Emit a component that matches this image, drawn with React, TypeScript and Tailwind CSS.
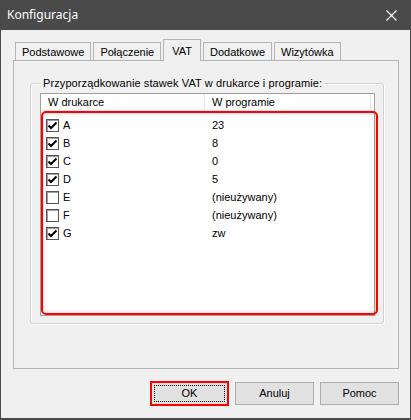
import React from "react";

const rows = [
  { code: "A", value: "23", checked: true },
  { code: "B", value: "8", checked: true },
  { code: "C", value: "0", checked: true },
  { code: "D", value: "5", checked: true },
  { code: "E", value: "(nieużywany)", checked: false },
  { code: "F", value: "(nieużywany)", checked: false },
  { code: "G", value: "zw", checked: true },
];

const tabs = ["Podstawowe", "Połączenie", "VAT", "Dodatkowe", "Wizytówka"];

function CheckBox({ checked }: { checked: boolean }) {
  return (
    <div className="h-[13px] w-[13px] border border-[#555] shadow-[inset_1px_1px_0_#a0a0a0] bg-white flex items-center justify-center">
      {checked && (
        <svg width="11" height="11" viewBox="0 0 11 11">
          <path d="M1.5 5.5 L4 8 L9.5 2.5" fill="none" stroke="#000" strokeWidth="2" />
        </svg>
      )}
    </div>
  );
}

function Tab({ label, active }: { label: string; active: boolean }) {
  if (active) {
    return (
      <div className="relative z-10 -mb-[1px] h-[22px] px-[8px] pt-[3px] bg-[#f0f0f0] border border-b-0 border-[#b4b4b4] text-[11px]">
        {label}
      </div>
    );
  }
  return (
    <div className="h-[18px] px-[6px] pt-[1px] bg-[#f0f0f0] border border-b-0 border-[#b4b4b4] text-[11px]">
      {label}
    </div>
  );
}

export default function App() {
  return (
    <div className="w-[411px] h-[420px] bg-[#4a4a4a] flex flex-col font-['Liberation_Sans',Arial,sans-serif] text-[11px] text-black">
      {/* Title bar */}
      <div className="h-[30px] flex items-center justify-between pl-[7px] pr-[14px] text-white">
        <span className="font-['Noto_Sans',sans-serif] text-[12px]">Konfiguracja</span>
        <svg width="11" height="11" viewBox="0 0 11 11">
          <path d="M0.5 0.5 L10.5 10.5 M10.5 0.5 L0.5 10.5" stroke="#fff" strokeWidth="1.2" />
        </svg>
      </div>

      {/* Body */}
      <div className="flex-1 mx-[1px] mb-[2px] bg-[#f0f0f0] flex flex-col pt-[9px]">
        {/* Tabs */}
        <div className="ml-[14px] flex items-end gap-[2px] h-[21px]">
          {tabs.map((t) => (
            <Tab key={t} label={t} active={t === "VAT"} />
          ))}
        </div>

        {/* Tab panel */}
        <div className="ml-[12px] w-[386px] h-[309px] border border-[#b4b4b4] bg-[#f0f0f0] pt-[22px] pl-[16px]">
          {/* Group box */}
          <div className="relative w-[354px] h-[241px] border border-[#d0d0d0] rounded-[3px] shadow-[inset_1px_1px_0_#fff,1px_1px_0_#fff] pt-[9px] pl-[9px]">
            <span className="absolute -top-[8px] left-[10px] bg-[#f0f0f0] px-[2px] leading-[14px] tracking-[0.1px]">
              Przyporządkowanie stawek VAT w drukarce i programie:
            </span>

            {/* List view */}
            <div className="relative w-[335px] h-[223px] border border-[#a0a0a0] bg-white">
              <div className="flex h-[17px] border-b border-[#e5e5e5]">
                <div className="w-[164px] pl-[7px] leading-[16px] border-r border-[#e5e5e5]">W drukarce</div>
                <div className="w-[166px] pl-[7px] leading-[16px] border-r border-[#e5e5e5]">W programie</div>
              </div>
              <div className="pt-[5px]">
                {rows.map((r) => (
                  <div key={r.code} className="flex items-center h-[18px]">
                    <div className="w-[164px] flex items-center pl-[5px] gap-[4px]">
                      <CheckBox checked={r.checked} />
                      <span>{r.code}</span>
                    </div>
                    <div className="pl-[7px]">{r.value}</div>
                  </div>
                ))}
              </div>

              {/* red annotation */}
              <div className="absolute left-[0px] top-[17px] w-[337px] h-[204px] border-2 border-[#ff0000] rounded-[5px] shadow-[inset_0_0_5px_rgba(0,0,0,0.18)] pointer-events-none" />
            </div>
          </div>
        </div>

        {/* Buttons */}
        <div className="flex justify-end gap-[6px] pr-[11px] mt-[12px]">
          <button className="w-[79px] h-[25px] border-2 border-[#ff0000] bg-[#e1e1e1] flex items-center justify-center">
            <span className="w-[71px] h-[17px] border border-dotted border-black flex items-center justify-center">OK</span>
          </button>
          <button className="w-[79px] h-[23px] mt-[1px] border border-[#adadad] bg-[#e1e1e1]">Anuluj</button>
          <button className="w-[79px] h-[23px] mt-[1px] border border-[#adadad] bg-[#e1e1e1]">Pomoc</button>
        </div>
      </div>
    </div>
  );
}
